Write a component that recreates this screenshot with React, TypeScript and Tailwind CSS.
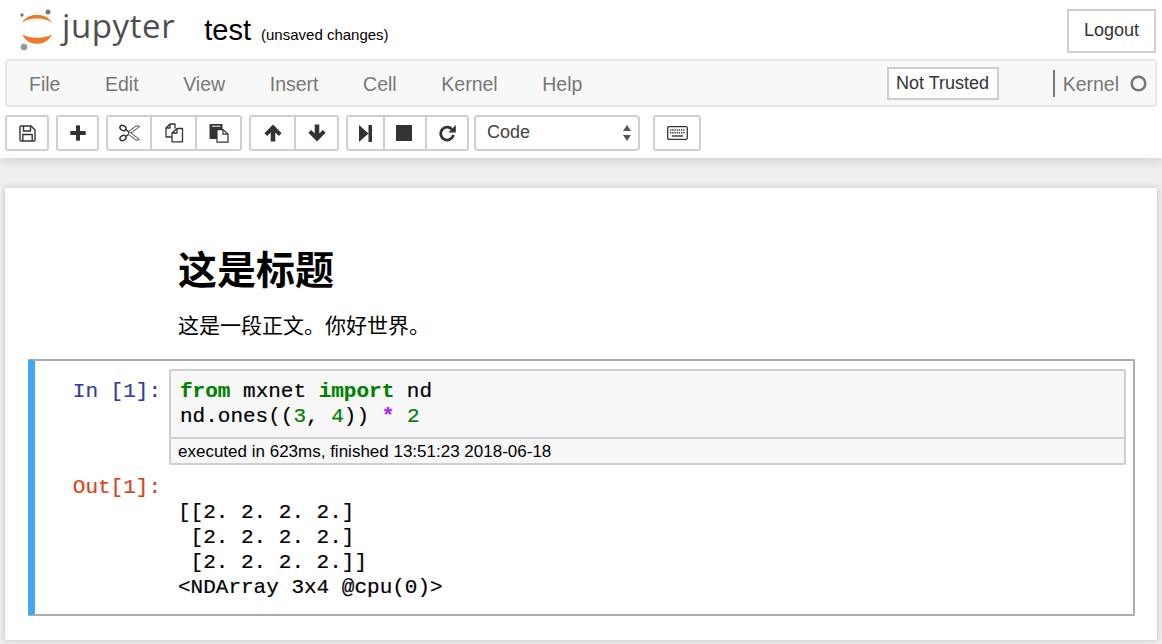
import type { ReactNode } from 'react';

const MONO = 'font-["Liberation_Mono",monospace] [-webkit-text-stroke:0.2px]';
const CJK = 'font-["Liberation_Sans","Noto_Sans_CJK_SC",sans-serif]';

function Logo() {
    return (
        <div className="flex items-center">
            <svg width="40" height="42" viewBox="0 0 40 42">
                <path d="M4 14 C9 3 29 3 34 14 C28 8 10 8 4 14Z" fill="#f37726" />
                <path d="M4 25 C10 30 28 30 34 25 C29 38 9 38 4 25Z" fill="#f37726" />
                <circle cx="30" cy="3" r="2.5" fill="#767677" />
                <circle cx="4" cy="6" r="1.7" fill="#767677" />
                <circle cx="6" cy="38" r="3.3" fill="#989798" />
            </svg>
            <span className='mb-[8px] ml-[4px] text-[33px] leading-none tracking-[0.6px] text-[#4e4e4e] font-["Open_Sans",sans-serif]'>jupyter</span>
        </div>
    );
}

function ToolGroup({ children }: { children: ReactNode }) {
    return <div className="flex h-[36px] rounded-[3px] border-2 border-[#cfcfcf] bg-white text-[#333]">{children}</div>;
}

function ToolBtn({ children, w, last }: { children: ReactNode; w: number; last?: boolean }) {
    return (
        <div style={{ width: w }} className={`flex items-center justify-center ${last ? '' : 'border-r-2 border-[#cfcfcf]'}`}>
            {children}
        </div>
    );
}

function SaveIcon() {
    return (
        <svg width="17" height="17" viewBox="0 0 17 17" fill="none" stroke="#333" strokeWidth="1.4">
            <path d="M1 2.2 a1.2 1.2 0 0 1 1.2-1.2 H12 L16 5 V14.8 a1.2 1.2 0 0 1-1.2 1.2 H2.2 a1.2 1.2 0 0 1-1.2-1.2Z" />
            <path d="M4.5 1 V6 H11.5 V1 M3.8 16 V9.5 H13.2 V16" />
        </svg>
    );
}

function PlusIcon() {
    return (
        <svg width="16" height="16" viewBox="0 0 16 16" fill="#333">
            <path d="M6 1 a.8 .8 0 0 1 .8-.8 H9.2 A.8 .8 0 0 1 10 1 V6 H15 a.8 .8 0 0 1 .8 .8 V9.2 a.8 .8 0 0 1-.8 .8 H10 V15 a.8 .8 0 0 1-.8 .8 H6.8 A.8 .8 0 0 1 6 15 V10 H1 a.8 .8 0 0 1-.8-.8 V6.8 A.8 .8 0 0 1 1 6 H6Z" />
        </svg>
    );
}

function CutIcon() {
    return (
        <svg width="21" height="18" viewBox="0 0 21 18" fill="none" stroke="#333">
            <ellipse cx="4" cy="4" rx="3.2" ry="2.4" transform="rotate(30 4 4)" strokeWidth="1.5" />
            <ellipse cx="4" cy="14" rx="3.2" ry="2.4" transform="rotate(-30 4 14)" strokeWidth="1.5" />
            <path d="M7 5.8 L9.5 7.5 M7 12.2 L9.5 10.5" strokeWidth="1.5" />
            <path d="M9.5 7.5 L17 2 Q19 1.5 20.5 2.5 L12 9 M9.5 10.5 L17 16 Q19 16.5 20.5 15.5 L12 9 L9.5 7.5 L9.5 10.5" strokeWidth="0.9" />
        </svg>
    );
}

function CopyIcon() {
    return (
        <svg width="20" height="20" viewBox="0 0 20 20" fill="none" stroke="#333" strokeWidth="1.3" strokeLinejoin="round">
            <path d="M6 1 H11 V5.5 M6 1 V5 H2 L6 1 M2 5 V14 H8" />
            <path d="M13 5.5 H18.5 V18.8 H8 V10 L13 5.5 V10 H8" />
        </svg>
    );
}

function PasteIcon() {
    return (
        <svg width="20" height="20" viewBox="0 0 20 20">
            <path d="M1.5 1 H12.5 a1 1 0 0 1 1 1 V16 H1.5 a1 1 0 0 1-1-1 V2 a1 1 0 0 1 1-1Z" fill="#333" />
            <path d="M3 3.2 H11.5" stroke="#fff" strokeWidth="1" />
            <path d="M8 6.6 H14.2 L19 11.2 V19.2 H8Z" fill="#fff" stroke="#333" strokeWidth="1.2" strokeLinejoin="round" />
            <path d="M14 6.6 V11.2 H19" fill="none" stroke="#333" strokeWidth="1.2" />
        </svg>
    );
}

function ArrowIcon({ down }: { down?: boolean }) {
    return (
        <svg width="18" height="18" viewBox="0 0 18 18" fill="#333" className={down ? 'rotate-180' : ''}>
            <path d="M9 .6 L17.6 9.2 L14.8 12 L11.3 8.5 V17.4 H6.7 V8.5 L3.2 12 L.4 9.2Z" />
        </svg>
    );
}

function StepIcon() {
    return (
        <svg width="13" height="17" viewBox="0 0 13 17" fill="#333">
            <path d="M0 0 L9.5 8.5 L0 17Z M9.5 0 H13 V17 H9.5Z" />
        </svg>
    );
}

function RedoIcon() {
    return (
        <svg width="17" height="18" viewBox="0 0 17 18">
            <path d="M14.4 11 A6.4 6.4 0 1 1 12.8 5.2" fill="none" stroke="#333" strokeWidth="2.8" />
            <path d="M16.8 1 V8.4 H9.4Z" fill="#333" />
        </svg>
    );
}

function KeyboardIcon() {
    return (
        <svg width="21" height="14" viewBox="0 0 21 14" fill="none" stroke="#333">
            <rect x=".7" y=".7" width="19.6" height="12.6" rx="1.2" strokeWidth="1.3" />
            <path d="M3 4 H18 M3 6.8 H18" strokeWidth="1.4" strokeDasharray="1.3 .9" />
            <path d="M5 10 H16" strokeWidth="1.4" />
        </svg>
    );
}

export default function App() {
    return (
        <div className='w-[1162px] h-[644px] overflow-hidden bg-[#eeeeee] font-["Liberation_Sans",Arial,sans-serif]'>
            <div className="bg-white h-[158px] shadow-[0_3px_10px_rgba(0,0,0,0.12)] relative">
                <div className="flex h-[59px] items-center pl-[18px] pr-[6px]">
                    <Logo />
                    <span className="ml-[29px] mt-[2px] text-[29px] text-black">test</span>
                    <span className="ml-[10px] mt-[11px] text-[15px] text-black">(unsaved changes)</span>
                    <div className="ml-auto mt-[2px] flex h-[44px] w-[89px] items-center justify-center border-2 border-[#cfcfcf] text-[18px] text-[#333]">Logout</div>
                </div>
                <div className="mx-[5px] flex h-[48px] items-center rounded-[3px] border-2 border-[#e7e7e7] bg-[#f8f8f8] pl-[22px] pr-[8px] text-[19.5px] text-[#777]">
                    <div className="mt-[3px] flex gap-[44.6px]">
                        <span>File</span><span>Edit</span><span>View</span><span>Insert</span><span>Cell</span><span>Kernel</span><span>Help</span>
                    </div>
                    <div className="ml-auto flex h-[33px] w-[112px] items-center justify-center border-2 border-[#cfcfcf] bg-white pt-[1px] text-[18px] text-[#333]">Not Trusted</div>
                    <div className="ml-[54px] h-[27px] w-[2px] bg-[#777]" />
                    <span className="ml-[8px] mt-[3px]">Kernel</span>
                    <svg className="ml-[11px]" width="17" height="17" viewBox="0 0 17 17"><circle cx="8.5" cy="8.5" r="6.8" fill="none" stroke="#777" strokeWidth="2.6" /></svg>
                </div>
                <div className="mt-[8px] flex items-center gap-[7px] pl-[5px]">
                    <ToolGroup><ToolBtn w={40} last><SaveIcon /></ToolBtn></ToolGroup>
                    <ToolGroup><ToolBtn w={39} last><PlusIcon /></ToolBtn></ToolGroup>
                    <ToolGroup>
                        <ToolBtn w={44}><CutIcon /></ToolBtn>
                        <ToolBtn w={45}><CopyIcon /></ToolBtn>
                        <ToolBtn w={43} last><PasteIcon /></ToolBtn>
                    </ToolGroup>
                    <ToolGroup>
                        <ToolBtn w={45}><ArrowIcon /></ToolBtn>
                        <ToolBtn w={41} last><ArrowIcon down /></ToolBtn>
                    </ToolGroup>
                    <ToolGroup>
                        <ToolBtn w={37}><StepIcon /></ToolBtn>
                        <ToolBtn w={42}><div className="mr-[2px] h-[16px] w-[16px] bg-[#333]" /></ToolBtn>
                        <ToolBtn w={40} last><RedoIcon /></ToolBtn>
                    </ToolGroup>
                    <div className="-ml-[2px] flex h-[36px] w-[166px] items-center rounded-[4px] border-2 border-[#cfcfcf] bg-white pl-[11px] pr-[6px] text-[18px] text-[#444]">
                        <span className="-mt-[2px]">Code</span>
                        <svg className="ml-auto" width="10" height="16" viewBox="0 0 10 16"><path d="M5 0 L9 6 H1Z M5 16 L9 10 H1Z" fill="#555" /></svg>
                    </div>
                    <div className="ml-[6px]">
                        <ToolGroup><ToolBtn w={44} last><KeyboardIcon /></ToolBtn></ToolGroup>
                    </div>
                </div>
            </div>

            <div className="mx-[5px] mt-[30px] h-[452px] bg-white pl-[23px] pr-[22px] pt-[57px] shadow-[0_0_6px_rgba(0,0,0,0.2)]">
                <div className="pl-[150px]">
                    <h1 className={`text-[39px] font-bold leading-[52px] text-black ${CJK}`}>这是标题</h1>
                    <p className={`mt-[14px] text-[21px] leading-[30px] text-black ${CJK}`}>这是一段正文。你好世界。</p>
                </div>
                <div className="mt-[18px] flex h-[257px] rounded-[2px] border-2 border-l-[7px] border-[#ababab] border-l-[#42a5f5] pt-[8px] pr-[7px]">
                    <div className="w-full">
                        <div className="flex">
                            <div className={`w-[134px] pr-[8px] pt-[10px] text-right text-[21px] leading-[25px] text-[#303f9f] ${MONO}`}>In [1]:</div>
                            <div className="flex-1 rounded-[2px] border-2 border-[#cfcfcf] bg-[#f7f7f7]">
                                <pre className={`h-[66px] pl-[9px] pt-[8px] text-[21px] leading-[25px] text-black ${MONO}`}><b className="text-[#008000]">from</b> mxnet <b className="text-[#008000]">import</b> nd{'\n'}nd.ones((<span className="text-[#008000]">3</span>, <span className="text-[#008000]">4</span>)) <span className="font-bold text-[#aa22ff]">*</span> <span className="text-[#008000]">2</span></pre>
                                <div className="border-t-2 border-[#cfcfcf] pl-[7px] pt-[1px] text-[17px] leading-[23px] text-black">executed in 623ms, finished 13:51:23 2018-06-18</div>
                            </div>
                        </div>
                        <div className="mt-[8px] flex">
                            <div className={`w-[134px] pr-[8px] pt-[2px] text-right text-[21px] leading-[25px] text-[#d84315] ${MONO}`}>Out[1]:</div>
                            <pre className={`pl-[9px] pt-[27px] text-[21px] leading-[25px] text-black ${MONO}`}>{'[[2. 2. 2. 2.]\n [2. 2. 2. 2.]\n [2. 2. 2. 2.]]\n<NDArray 3x4 @cpu(0)>'}</pre>
                        </div>
                    </div>
                </div>
            </div>
        </div>
    );
}
